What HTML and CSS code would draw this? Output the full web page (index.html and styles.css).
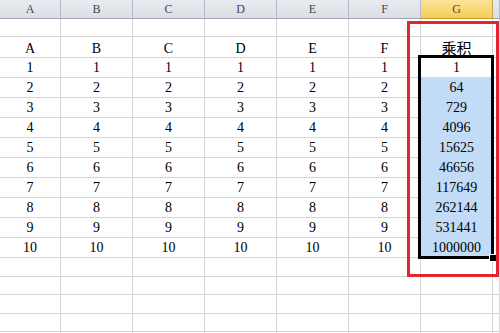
FILE: index.html
```html
<!DOCTYPE html>
<html>
<head>
    <title>乘积</title>
    <link rel="stylesheet" href="styles.css">
</head>
<body>
    <div class="sheet">
        <div class="row head">
            <div class="cell c0">A</div>
            <div class="cell">B</div>
            <div class="cell">C</div>
            <div class="cell">D</div>
            <div class="cell">E</div>
            <div class="cell">F</div>
            <div class="cell sel-col">G</div>
            <div class="cell rest"></div>
        </div>
        <div class="row r-top">
            <div class="cell c0"></div><div class="cell"></div><div class="cell"></div><div class="cell"></div>
            <div class="cell"></div><div class="cell"></div><div class="cell"></div><div class="cell rest"></div>
        </div>
        <div class="row r-title">
            <div class="cell c0">A</div>
            <div class="cell">B</div>
            <div class="cell">C</div>
            <div class="cell">D</div>
            <div class="cell">E</div>
            <div class="cell">F</div>
            <div class="cell cjk">乘积</div>
            <div class="cell rest"></div>
        </div>
        <div id="data"></div>
        <div id="empty"></div>

        <div class="selection"></div>
        <div class="handle"></div>
        <div class="highlight"></div>
    </div>

    <script>
        var data = document.getElementById('data');
        for (var i = 1; i <= 10; i++) {
            var row = document.createElement('div');
            row.className = 'row r-data';
            var html = '<div class="cell c0">' + i + '</div>';
            for (var c = 0; c < 5; c++) {
                html += '<div class="cell">' + i + '</div>';
            }
            var prod = Math.pow(i, 6);
            html += '<div class="cell ' + (i === 1 ? 'active' : 'picked') + '">' + prod + '</div>';
            html += '<div class="cell rest"></div>';
            row.innerHTML = html;
            data.appendChild(row);
        }

        var empty = document.getElementById('empty');
        for (var j = 0; j < 5; j++) {
            var blank = document.createElement('div');
            blank.className = 'row r-empty';
            var cells = '<div class="cell c0"></div>';
            for (var k = 0; k < 6; k++) {
                cells += '<div class="cell"></div>';
            }
            cells += '<div class="cell rest"></div>';
            blank.innerHTML = cells;
            empty.appendChild(blank);
        }
    </script>
</body>
</html>
```

FILE: styles.css
```css
body {
    margin: 0;
    background: #fff;
    overflow: hidden;
    font-family: "Liberation Serif", "Noto Sans CJK SC", serif;
    font-size: 14px;
    color: #000;
}

.sheet {
    position: relative;
    width: 500px;
    height: 333px;
    overflow: hidden;
}

.row {
    display: flex;
    height: 20px;
}

.cell {
    flex: none;
    width: 72px;
    border-right: 1px solid #d6d6d6;
    border-bottom: 1px solid #d6d6d6;
    display: flex;
    align-items: center;
    justify-content: center;
    padding-top: 1px;
    box-sizing: border-box;
}

.cell.c0 {
    width: 61px;
}

.cell.rest {
    flex: 1;
}

.head {
    height: 19px;
    background: linear-gradient(#e8ebef, #dadee4);
    font-size: 12px;
    color: #404850;
}

.head .cell {
    border-right: 1px solid #b3bac3;
    border-bottom: 1px solid #9ea6b0;
    padding-top: 0;
}

.head .sel-col {
    background: linear-gradient(#fbe39a, #f5cd58);
    border-right: 1px solid #c8a445;
    border-bottom: 1px solid #c99a2e;
    color: #5a4a20;
}

.r-top {
    height: 18px;
}

.r-title {
    height: 21px;
}

.r-title .cell {
    padding-top: 4px;
}

.r-title .cjk {
    font-family: "Noto Sans CJK SC", sans-serif;
    font-size: 15px;
    line-height: 16px;
    padding-top: 2px;
}

.r-empty {
    height: 18.5px;
}

.picked {
    background: #c2dcf7;
    background-clip: padding-box;
}

.selection {
    position: absolute;
    left: 418px;
    top: 55px;
    width: 76px;
    height: 204px;
    border: 3px solid #000;
    box-sizing: border-box;
}

.handle {
    position: absolute;
    left: 489px;
    top: 254px;
    width: 6px;
    height: 6px;
    background: #000;
    border: 1px solid #fff;
}

.highlight {
    position: absolute;
    left: 407px;
    top: 21px;
    width: 92px;
    height: 256px;
    border: 3px solid #e3262e;
    box-sizing: border-box;
}
```
